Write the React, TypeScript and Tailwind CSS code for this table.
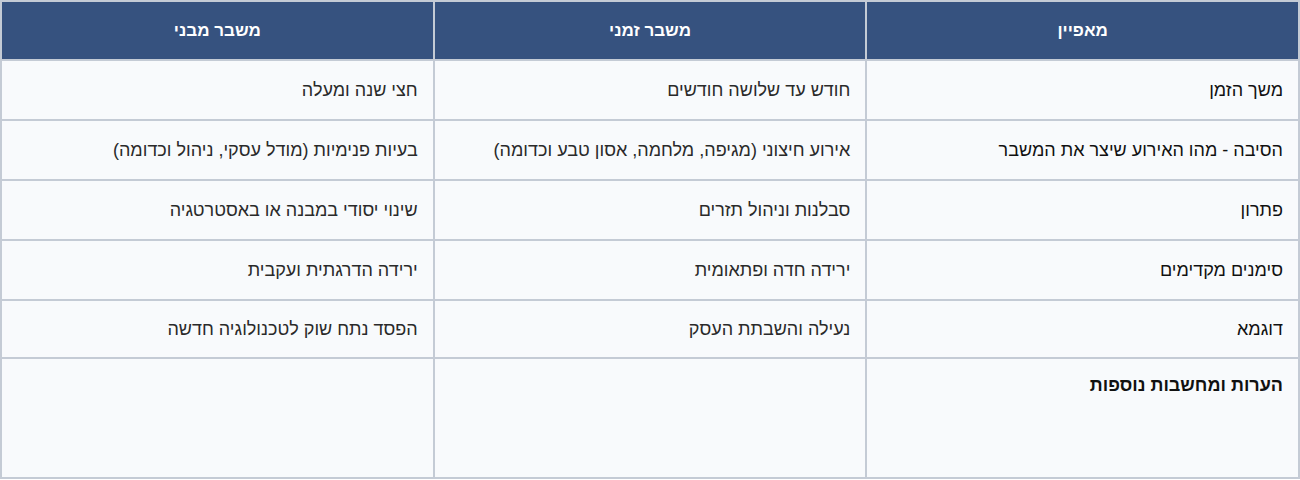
const headers = ["מאפיין", "משבר זמני", "משבר מבני"];

const rows: [string, string, string][] = [
  ["משך הזמן", "חודש עד שלושה חודשים", "חצי שנה ומעלה"],
  [
    "הסיבה - מהו האירוע שיצר את המשבר",
    "אירוע חיצוני (מגיפה, מלחמה, אסון טבע וכדומה)",
    "בעיות פנימיות (מודל עסקי, ניהול וכדומה)",
  ],
  ["פתרון", "סבלנות וניהול תזרים", "שינוי יסודי במבנה או באסטרטגיה"],
  ["סימנים מקדימים", "ירידה חדה ופתאומית", "ירידה הדרגתית ועקבית"],
  ["דוגמא", "נעילה והשבתת העסק", "הפסד נתח שוק לטכנולוגיה חדשה"],
];

export default function App() {
  return (
    <div
      dir="rtl"
      className="w-[1300px] h-[480px] bg-white font-['Liberation_Sans','Arial',sans-serif]"
    >
      <table className="w-full table-fixed border-collapse border-2 border-[#c4cbd5]">
        <thead>
          <tr>
            {headers.map((h) => (
              <th
                key={h}
                className="h-[59px] border-2 border-[#c4cbd5] bg-[#36527f] text-center text-[17px] font-bold text-white"
              >
                {h}
              </th>
            ))}
          </tr>
        </thead>
        <tbody>
          {rows.map((r, ri) => (
            <tr key={r[0]}>
              {r.map((c, i) => (
                <td
                  key={i}
                  className={`${ri === 4 ? "h-[58px]" : "h-[60px]"} border-2 border-[#c4cbd5] bg-[#f8fafc] px-[15px] pt-[1px] text-right text-[18px] ${
                    i === 0 ? "font-medium text-[#111]" : "text-[#2a2a2a]"
                  }`}
                >
                  {c}
                </td>
              ))}
            </tr>
          ))}
          <tr>
            <td className="h-[120px] border-2 border-[#c4cbd5] bg-[#f8fafc] px-[15px] pt-[13px] align-top text-right text-[18px] font-bold text-[#111]">
              הערות ומחשבות נוספות
            </td>
            <td className="h-[120px] border-2 border-[#c4cbd5] bg-[#f8fafc]" />
            <td className="h-[120px] border-2 border-[#c4cbd5] bg-[#f8fafc]" />
          </tr>
        </tbody>
      </table>
    </div>
  );
}
